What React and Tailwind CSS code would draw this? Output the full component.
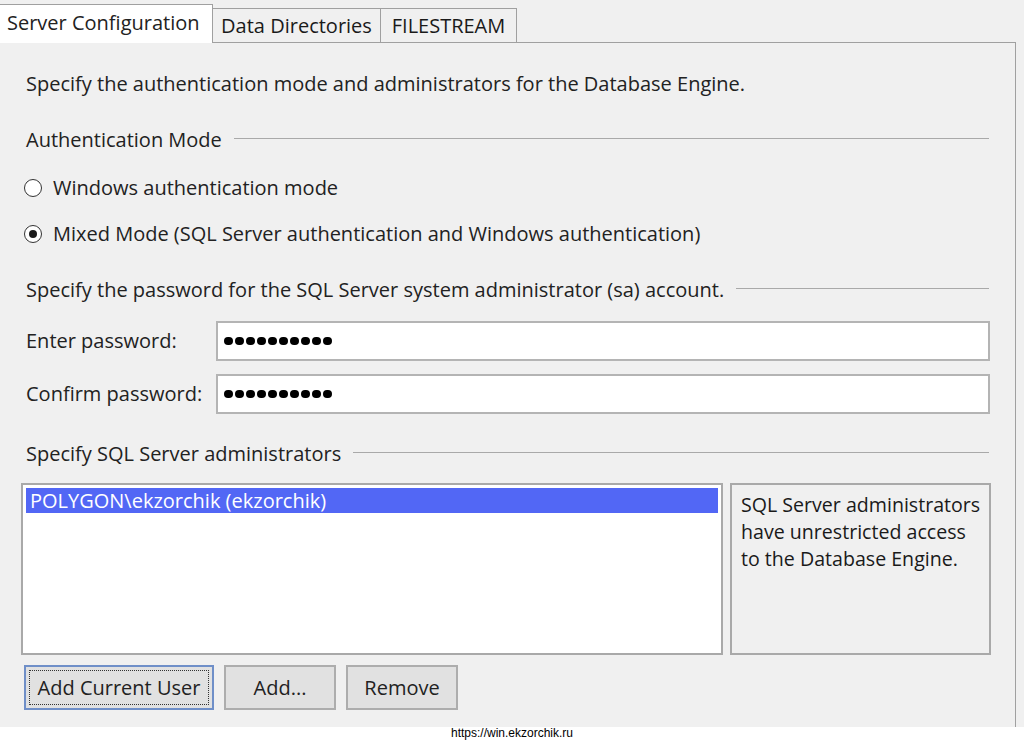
import React from "react";

const font = { fontFamily: '"Open Sans", "Noto Sans", sans-serif' };

function Radio({ checked }) {
  return (
    <span className="w-[18px] h-[18px] rounded-full border border-[#333] bg-white flex items-center justify-center shrink-0">
      {checked && <span className="w-[8px] h-[8px] rounded-full bg-[#1a1a1a]" />}
    </span>
  );
}

function Heading({ children, className }) {
  return (
    <div className={"flex items-center h-[26px] pl-[26px] pr-[26px] " + className}>
      <span className="whitespace-nowrap">{children}</span>
      <span className="flex-1 h-px bg-[#a9a9a9] ml-[12px] mt-[-4px]" />
    </div>
  );
}

function Dots() {
  return (
    <div className="flex gap-[2.5px] pl-[6px]">
      {Array.from({ length: 10 }).map((_, i) => (
        <span key={i} className="w-[8.5px] h-[8.5px] rounded-full bg-black" />
      ))}
    </div>
  );
}

export default function App() {
  return (
    <div className="w-[1024px] h-[740px] bg-white overflow-hidden text-[20px] text-[#222]" style={font}>
      <div className="h-[727px] bg-[#f0f0f0] flex flex-col">
        {/* tabs */}
        <div className="h-[42px] flex items-end relative z-10">
          <div className="h-[39px] w-[213px] bg-white border-t border-r border-[#a0a0a0] flex items-center pl-[7px] mb-[-1px] pb-[2px] whitespace-nowrap">
            Server Configuration
          </div>
          <div className="h-[34px] w-[168px] border-t border-r border-[#a0a0a0] flex items-center justify-center text-[#1a1a1a] whitespace-nowrap">
            Data Directories
          </div>
          <div className="h-[34px] w-[136px] border-t border-r border-[#a0a0a0] flex items-center justify-center text-[#1a1a1a]">
            FILESTREAM
          </div>
        </div>

        {/* panel */}
        <div className="flex-1 w-[1016px] border-t border-r border-[#a0a0a0] flex flex-col">
          <div className="mt-[28px] pl-[26px] leading-[26px]">
            Specify the authentication mode and administrators for the Database Engine.
          </div>

          <Heading className="mt-[30px]">Authentication Mode</Heading>

          <div className="mt-[22px] flex items-center h-[26px] pl-[24px] gap-[11px]">
            <Radio />
            <span>Windows authentication mode</span>
          </div>
          <div className="mt-[20px] flex items-center h-[26px] pl-[24px] gap-[11px]">
            <Radio checked />
            <span>Mixed Mode (SQL Server authentication and Windows authentication)</span>
          </div>

          <Heading className="mt-[30px]">
            Specify the password for the SQL Server system administrator (sa) account.
          </Heading>

          <div className="mt-[18px] flex items-center pl-[26px]">
            <span className="w-[190px]">Enter password:</span>
            <div className="w-[774px] h-[40px] bg-white border-2 border-[#b4b4b4] flex items-center">
              <Dots />
            </div>
          </div>
          <div className="mt-[13px] flex items-center pl-[26px]">
            <span className="w-[190px]">Confirm password:</span>
            <div className="w-[774px] h-[40px] bg-white border-2 border-[#b4b4b4] flex items-center">
              <Dots />
            </div>
          </div>

          <Heading className="mt-[27px]">Specify SQL Server administrators</Heading>

          <div className="mt-[16px] flex pl-[21px] gap-[7px]">
            <div className="w-[702px] h-[172px] bg-white border-2 border-[#a9a9a9] p-[3px]">
              <div className="h-[25px] bg-[#5267f5] text-white flex items-center pl-[4px]">
                POLYGON\ekzorchik (ekzorchik)
              </div>
            </div>
            <div className="w-[261px] h-[172px] border-2 border-[#a9a9a9] pl-[9px] pr-[4px] pt-[6px] leading-[27px] text-[19.6px] text-[#1a1a1a]">
              SQL Server administrators have unrestricted access to the Database Engine.
            </div>
          </div>

          <div className="mt-[10px] flex pl-[24px] gap-[10px]">
            <div className="w-[190px] h-[45px] bg-[#e1e1e1] border-2 border-[#6f8fc8] p-[3px]">
              <div className="w-full h-full border border-dotted border-[#333] flex items-center justify-center whitespace-nowrap">
                Add Current User
              </div>
            </div>
            <div className="w-[112px] h-[45px] bg-[#e1e1e1] border-2 border-[#adadad] flex items-center justify-center">
              Add...
            </div>
            <div className="w-[112px] h-[45px] bg-[#e1e1e1] border-2 border-[#adadad] flex items-center justify-center">
              Remove
            </div>
          </div>
        </div>
      </div>
      <div className="h-[13px] flex justify-center items-center text-[12px] leading-[13px] text-black" style={{ fontFamily: '"Liberation Sans", Arial, sans-serif' }}>
        https://win.ekzorchik.ru
      </div>
    </div>
  );
}
